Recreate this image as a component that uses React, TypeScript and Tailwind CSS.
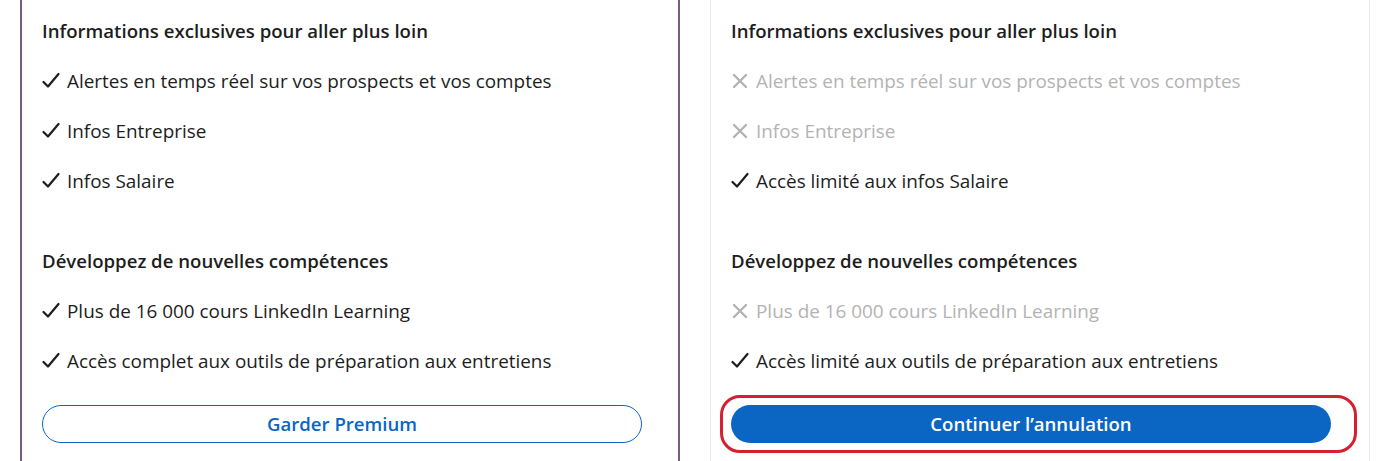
import React from "react";

type Item = { text: string; ok: boolean };
type Section = { title: string; items: Item[] };

const left: Section[] = [
  {
    title: "Informations exclusives pour aller plus loin",
    items: [
      { text: "Alertes en temps réel sur vos prospects et vos comptes", ok: true },
      { text: "Infos Entreprise", ok: true },
      { text: "Infos Salaire", ok: true },
    ],
  },
  {
    title: "Développez de nouvelles compétences",
    items: [
      { text: "Plus de 16 000 cours LinkedIn Learning", ok: true },
      { text: "Accès complet aux outils de préparation aux entretiens", ok: true },
    ],
  },
];

const right: Section[] = [
  {
    title: "Informations exclusives pour aller plus loin",
    items: [
      { text: "Alertes en temps réel sur vos prospects et vos comptes", ok: false },
      { text: "Infos Entreprise", ok: false },
      { text: "Accès limité aux infos Salaire", ok: true },
    ],
  },
  {
    title: "Développez de nouvelles compétences",
    items: [
      { text: "Plus de 16 000 cours LinkedIn Learning", ok: false },
      { text: "Accès limité aux outils de préparation aux entretiens", ok: true },
    ],
  },
];

function Check() {
  return (
    <svg width="18" height="18" viewBox="0 0 18 18" className="shrink-0">
      <path
        d="M1.5 10 L6 14.5 L16.5 2"
        fill="none"
        stroke="currentColor"
        strokeWidth="2.2"
        strokeLinecap="round"
        strokeLinejoin="round"
      />
    </svg>
  );
}

function Cross() {
  return (
    <svg width="18" height="18" viewBox="0 0 18 18" className="shrink-0">
      <path
        d="M3 3 L15 15 M15 3 L3 15"
        fill="none"
        stroke="currentColor"
        strokeWidth="2.4"
        strokeLinecap="round"
      />
    </svg>
  );
}

function Feature({ item }: { item: Item }) {
  return (
    <div
      className={`flex h-[50px] items-center gap-[7px] ${
        item.ok ? "text-[#1d1d1d]" : "text-[#b3b3b3]"
      }`}
    >
      {item.ok ? <Check /> : <Cross />}
      <span>{item.text}</span>
    </div>
  );
}

function Sections({ sections }: { sections: Section[] }) {
  return (
    <div className="flex flex-col gap-[30px]">
      {sections.map((s, i) => (
        <div key={i}>
          <div className="flex h-[50px] items-center text-[18.6px] font-semibold text-[#1d1d1d]">
            {s.title}
          </div>
          {s.items.map((it, j) => (
            <Feature key={j} item={it} />
          ))}
        </div>
      ))}
    </div>
  );
}

export default function App() {
  return (
    <div
      className="flex h-[461px] gap-[30px] overflow-hidden bg-white pl-[20px] text-[18.9px]"
      style={{ fontFamily: "'Open Sans', 'Noto Sans', sans-serif" }}
    >
      <div className="w-[660px] shrink-0 border-x-2 border-[#7b5a80] px-[20px] pt-[6px]">
        <Sections sections={left} />
        <button className="mt-[19px] h-[38px] w-[600px] rounded-full border border-[#0a66c2] text-[18.6px] font-semibold text-[#0a66c2]">
          Garder Premium
        </button>
      </div>
      <div className="w-[660px] shrink-0 border-x border-[#ececec] px-[20px] pt-[6px]">
        <Sections sections={right} />
        <div className="relative mt-[19px] w-[600px]">
          <button className="h-[38px] w-[600px] rounded-full bg-[#0a66c2] text-[18.6px] font-semibold text-white">
            Continuer l’annulation
          </button>
          <div className="pointer-events-none absolute -top-[10px] -right-[26px] -bottom-[10px] -left-[11px] rounded-[20px] border-[3px] border-[#d42030]" />
        </div>
      </div>
    </div>
  );
}
